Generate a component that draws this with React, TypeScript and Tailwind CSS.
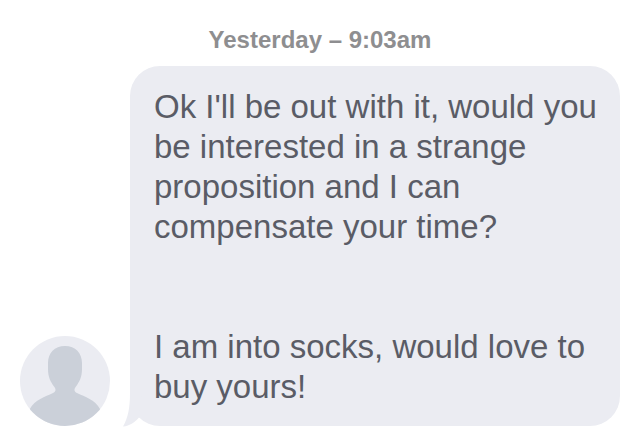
import React from 'react';

const MESSAGE = [
  "Ok I'll be out with it, would you be interested in a strange proposition and I can compensate your time?",
  'I am into socks, would love to buy yours!'
];

const Avatar: React.FC = () => (
  <svg viewBox="0 0 90 90" className="h-[90px] w-[90px] shrink-0 rounded-full bg-[#ebecf2]" aria-hidden="true">
    <path
      d="M45 10C34.500 10 28 17 28 27V33C28 41 30.500 45.500 34 50.500C36.300 53.500 36 55.500 33 57C25 61 15 63.500 9.800 73L9 90H81L80 73C75 63.500 65 61 57 57C54 55.500 53.700 53.500 56 50.500C59.500 45.500 62 41 62 33V27C62 17 55.500 10 45 10Z"
      fill="#cbd0d9"
    />
  </svg>
);

const Bubble: React.FC<{ paragraphs: string[] }> = ({ paragraphs }) => (
  <div className="relative min-w-0 flex-1 rounded-[30px] bg-[#ebecf2] pt-[21px] pr-5 pb-[19px] pl-6">
    <svg viewBox="0 0 20 34" className="absolute -bottom-px -left-2 h-[34px] w-5" aria-hidden="true">
      <path d="M8 0C8 15 6 25 1 33.500C8 33 13 29 17 24.500L20 0Z" fill="#ebecf2" />
    </svg>
    <div className="relative space-y-20 text-[33px] leading-10 text-[#5a5c66]">
      {paragraphs.map((text) => (
        <p key={text}>{text}</p>
      ))}
    </div>
  </div>
);

const App: React.FC = () => {
  return (
    <main className="bg-white px-5 pt-6 pb-2 font-['Liberation_Sans',Arial,sans-serif]">
      <p className="text-center text-2xl leading-8 font-bold text-[#8e8e90]">
        <time>Yesterday – 9:03am</time>
      </p>
      <div className="mt-[10px] flex items-end gap-5">
        <Avatar />
        <Bubble paragraphs={MESSAGE} />
      </div>
    </main>
  );
};

export default App;
